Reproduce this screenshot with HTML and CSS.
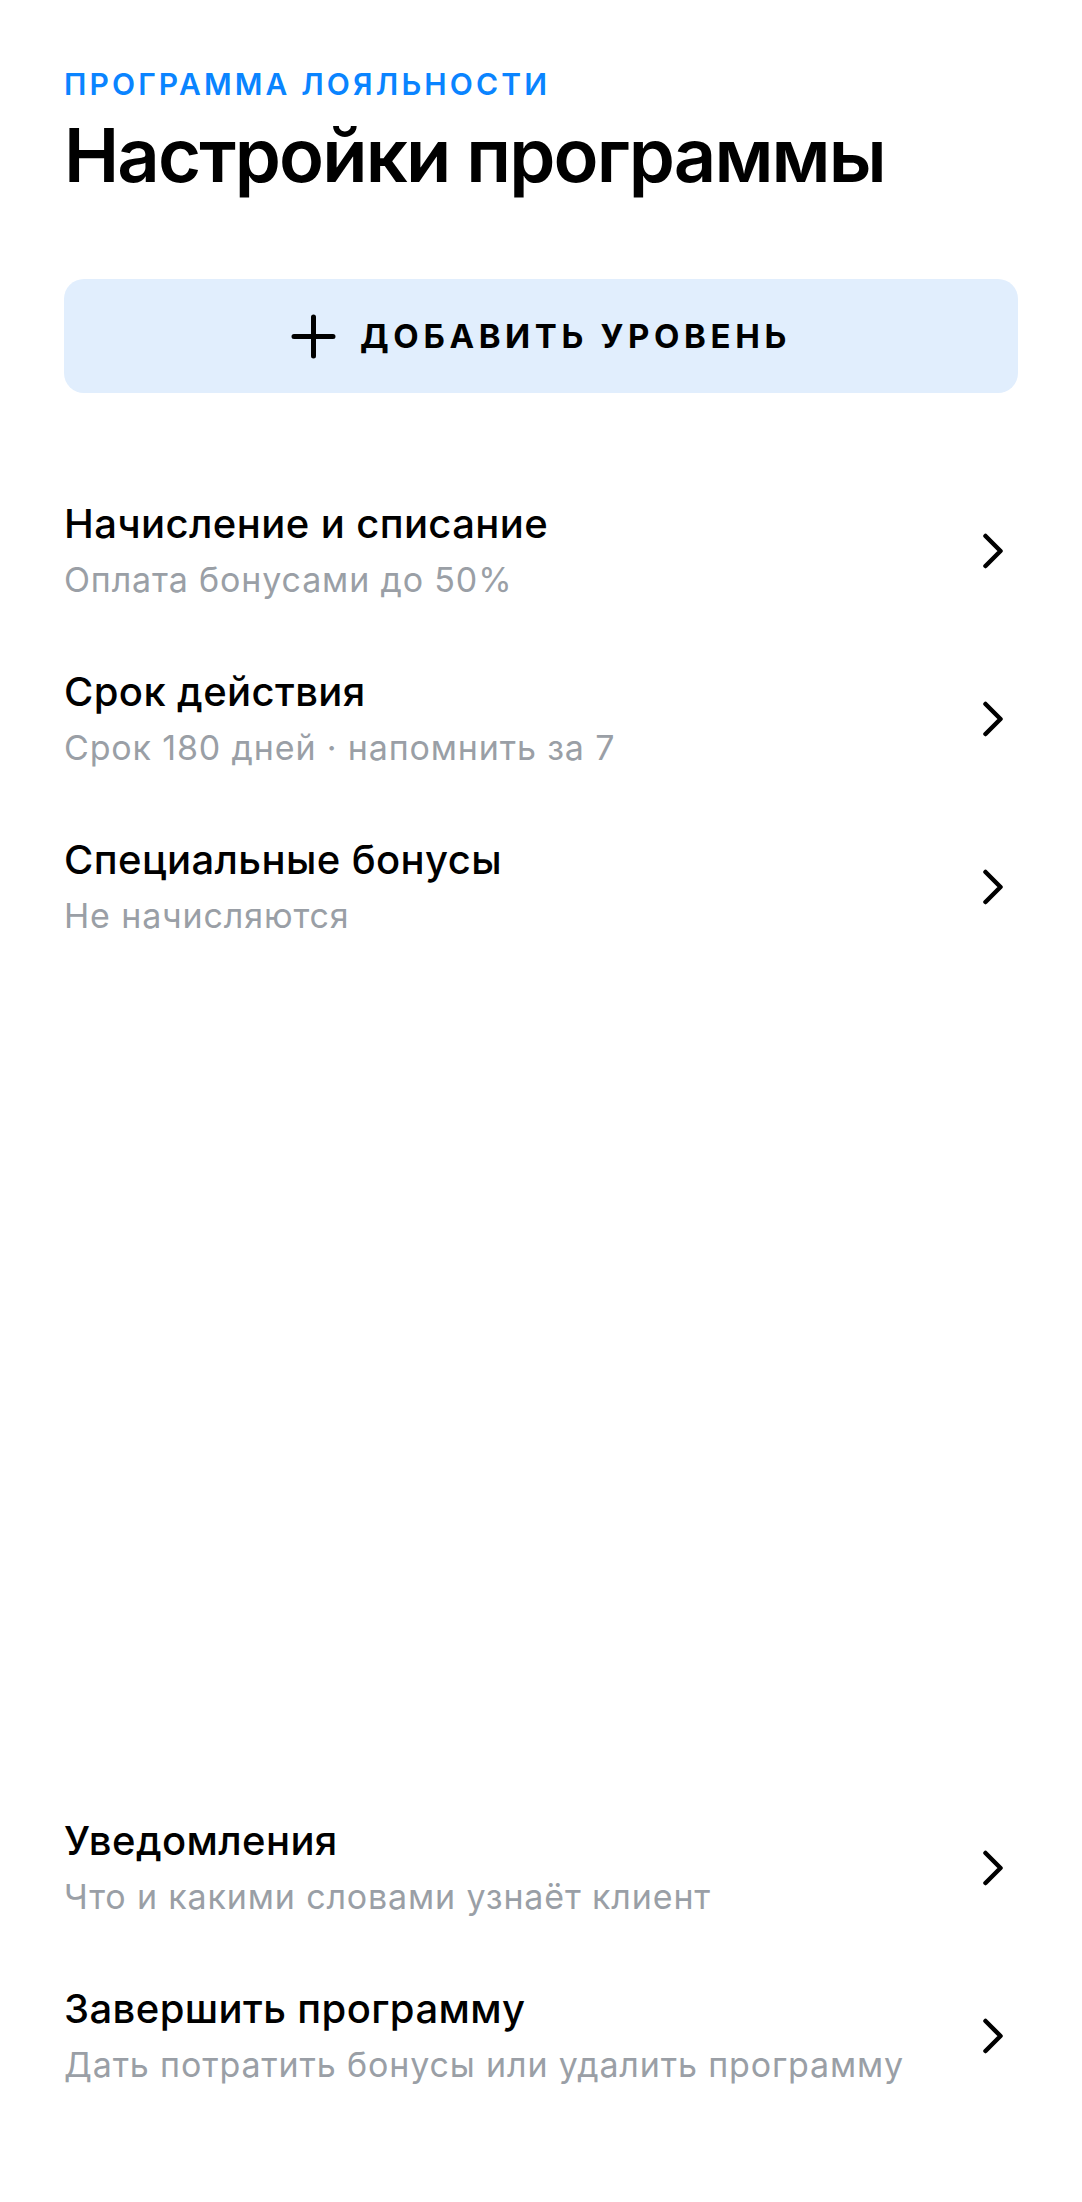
FILE: index.html
```html
<!DOCTYPE html>
<html lang="ru">
<head>
<meta charset="utf-8">
<title>Настройки программы</title>
<link rel="stylesheet" href="styles.css">
</head>
<body>
<main class="page">
  <header class="head">
    <div class="eyebrow">ПРОГРАММА ЛОЯЛЬНОСТИ</div>
    <h1 class="title">Настройки программы</h1>
  </header>

  <button class="add-btn" type="button">
    <svg class="plus" viewBox="0 0 45 45" width="45" height="45" aria-hidden="true">
      <path d="M22.5 3 V42 M3 22.5 H42" fill="none" stroke="#000" stroke-width="5" stroke-linecap="round"/>
    </svg>
    <span>ДОБАВИТЬ УРОВЕНЬ</span>
  </button>

  <ul class="list">
    <li class="row">
      <div class="row-text">
        <div class="row-title">Начисление и списание</div>
        <div class="row-sub">Оплата бонусами до 50%</div>
      </div>
      <svg class="chev" viewBox="0 0 22 36" width="22" height="36" aria-hidden="true"><path d="M3.5 3 L18.5 18 L3.5 33" fill="none" stroke="#000" stroke-width="4.5" stroke-linecap="round" stroke-linejoin="round"/></svg>
    </li>
    <li class="row">
      <div class="row-text">
        <div class="row-title">Срок действия</div>
        <div class="row-sub">Срок 180 дней · напомнить за 7</div>
      </div>
      <svg class="chev" viewBox="0 0 22 36" width="22" height="36" aria-hidden="true"><path d="M3.5 3 L18.5 18 L3.5 33" fill="none" stroke="#000" stroke-width="4.5" stroke-linecap="round" stroke-linejoin="round"/></svg>
    </li>
    <li class="row">
      <div class="row-text">
        <div class="row-title">Специальные бонусы</div>
        <div class="row-sub">Не начисляются</div>
      </div>
      <svg class="chev" viewBox="0 0 22 36" width="22" height="36" aria-hidden="true"><path d="M3.5 3 L18.5 18 L3.5 33" fill="none" stroke="#000" stroke-width="4.5" stroke-linecap="round" stroke-linejoin="round"/></svg>
    </li>
  </ul>

  <ul class="list list-bottom">
    <li class="row">
      <div class="row-text">
        <div class="row-title">Уведомления</div>
        <div class="row-sub">Что и какими словами узнаёт клиент</div>
      </div>
      <svg class="chev" viewBox="0 0 22 36" width="22" height="36" aria-hidden="true"><path d="M3.5 3 L18.5 18 L3.5 33" fill="none" stroke="#000" stroke-width="4.5" stroke-linecap="round" stroke-linejoin="round"/></svg>
    </li>
    <li class="row">
      <div class="row-text">
        <div class="row-title">Завершить программу</div>
        <div class="row-sub">Дать потратить бонусы или удалить программу</div>
      </div>
      <svg class="chev" viewBox="0 0 22 36" width="22" height="36" aria-hidden="true"><path d="M3.5 3 L18.5 18 L3.5 33" fill="none" stroke="#000" stroke-width="4.5" stroke-linecap="round" stroke-linejoin="round"/></svg>
    </li>
  </ul>
</main>
</body>
</html>
```

FILE: styles.css
```css
* { box-sizing: border-box; }

html, body {
  margin: 0;
  padding: 0;
  background: #ffffff;
}

body {
  font-family: Inter, "Noto Sans", "Liberation Sans", sans-serif;
  color: #000000;
}

.page {
  min-height: 100vh;
  display: flex;
  flex-direction: column;
  padding: 66px 64px 115px;
}

.head {
  display: flex;
  flex-direction: column;
  gap: 9px;
}

.eyebrow {
  font-size: 30px;
  line-height: 36px;
  font-weight: 600;
  letter-spacing: 0.105em;
  color: #0a84ff;
}

.title {
  margin: 0;
  font-size: 74px;
  line-height: 88px;
  font-weight: 600;
  letter-spacing: -0.025em;
}

.add-btn {
  margin-top: 80px;
  height: 114px;
  width: 100%;
  border: 0;
  border-radius: 20px;
  background: #e1eefd;
  display: flex;
  align-items: center;
  justify-content: center;
  gap: 24px;
  font-family: inherit;
  font-size: 33px;
  font-weight: 700;
  letter-spacing: 0.14em;
  color: #000;
  padding: 0;
}

.plus { display: block; flex: none; }

.list {
  list-style: none;
  margin: 107px 0 0;
  padding: 0;
  display: flex;
  flex-direction: column;
  gap: 66px;
}

.list-bottom {
  margin-top: auto;
}

.row {
  display: flex;
  align-items: center;
  justify-content: space-between;
}

.row-text {
  display: flex;
  flex-direction: column;
  gap: 10px;
}

.row-title {
  font-size: 40px;
  line-height: 48px;
  font-weight: 500;
  letter-spacing: 0.01em;
}

.row-sub {
  font-size: 34px;
  line-height: 44px;
  font-weight: 400;
  letter-spacing: 0.025em;
  color: #9a9fa6;
}

.chev {
  display: block;
  flex: none;
  margin-right: 14px;
}
```
